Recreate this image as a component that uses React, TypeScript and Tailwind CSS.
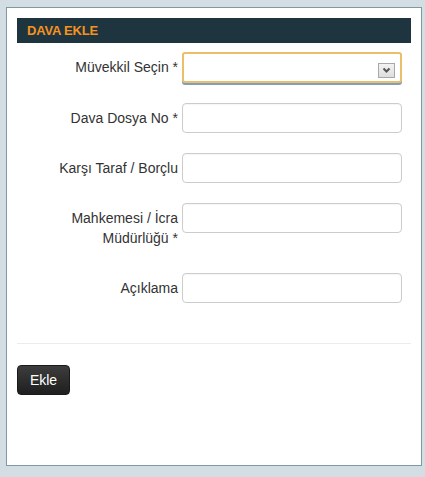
import React from "react";

const font = { fontFamily: '"Liberation Sans", Arial, sans-serif' };

function Row({ label, children, last }: { label: React.ReactNode; children: React.ReactNode; last?: boolean }) {
  return (
    <div className={`flex items-start ${last ? "" : "mb-[20px]"}`}>
      <label className="w-[161px] shrink-0 text-right py-[5px] text-[14px] leading-[20px] text-[#333333]">{label}</label>
      <div className="ml-[4px]">{children}</div>
    </div>
  );
}

function TextInput() {
  return (
    <input
      type="text"
      className="block w-[220px] h-[30px] rounded-[4px] border border-[#cccccc] bg-white outline-none shadow-[inset_0_1px_1px_rgba(0,0,0,0.04)]"
    />
  );
}

export default function App() {
  return (
    <div className="min-h-[477px] w-[425px] bg-[#d2dee3] pt-[7px] pl-[6px]" style={font}>
      <div className="w-[416px] h-[459px] border border-[#80989f] bg-white p-[10px]">
        <div className="h-[25px] bg-[#1e3540] flex items-center pl-[10px]">
          <span className="text-[13px] font-bold tracking-[-0.2px] text-[#f7921e]">DAVA EKLE</span>
        </div>
        <div className="mt-[9px]">
          <Row label="Müvekkil Seçin *">
            <div className="w-[220px] h-[31px] rounded-[3px] border-2 border-[#ebbe69] bg-white shadow-[0_2px_0_#7f9fbd] flex justify-end pt-[9px] pr-[5px]">
              <div className="w-[17px] h-[15px] border border-[#a8a8a8] bg-gradient-to-b from-[#f3f3f3] to-[#dedede] flex items-center justify-center">
                <svg width="9" height="7" viewBox="0 0 9 7">
                  <path d="M1.5 1.5 L4.5 4.5 L7.5 1.5" fill="none" stroke="#555555" strokeWidth="2" />
                </svg>
              </div>
            </div>
          </Row>
          <Row label="Dava Dosya No *">
            <TextInput />
          </Row>
          <Row label="Karşı Taraf / Borçlu">
            <TextInput />
          </Row>
          <Row label="Mahkemesi / İcra Müdürlüğü *">
            <TextInput />
          </Row>
          <Row label="Açıklama" last>
            <TextInput />
          </Row>
        </div>
        <div className="mt-[40px] h-px bg-[#ececec]" />
        <button className="mt-[21px] w-[53px] h-[30px] rounded-[4px] border border-[#1a1a1a] bg-gradient-to-b from-[#3d3d3d] to-[#1f1f1f] text-white text-[14px] leading-[20px] flex items-center justify-center">
          Ekle
        </button>
      </div>
    </div>
  );
}
